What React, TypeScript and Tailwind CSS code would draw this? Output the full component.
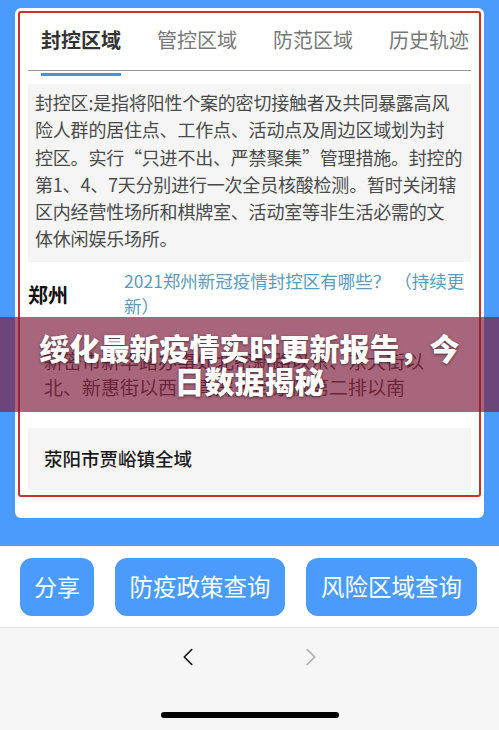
import { ChevronLeft, ChevronRight } from 'lucide-react'

const FONT = { fontFamily: '"Noto Sans CJK SC", "Noto Sans", sans-serif' }

const TABS = ['封控区域', '管控区域', '防范区域', '历史轨迹']

const DEFINITION = [
  '封控区:是指将阳性个案的密切接触者及共同暴露高风',
  '险人群的居住点、工作点、活动点及周边区域划为封',
  '控区。实行“只进不出、严禁聚集”管理措施。封控的',
  '第1、4、7天分别进行一次全员核酸检测。暂时关闭辖',
  '区内经营性场所和棋牌室、活动室等非生活必需的文',
  '体休闲娱乐场所。',
]

const XINMI = ['新密市新华路办事处北密新路以东、东大街以', '北、新惠街以西、青屏大街东侧第二排以南']

export default function App() {
  return (
    <div className="relative flex h-[730px] w-[499px] flex-col overflow-hidden bg-[#f6f6f6]" style={FONT}>
      <section className="h-[546px] bg-[#4a9bfb] px-[15px] pt-[8px]">
        <div className="rounded-[6px] bg-white px-[3px] pt-[3px] pb-[21px]">
          <div className="rounded-[3px] border-[2.5px] border-[#c9302c] px-[8px]">
            <nav className="relative flex h-[58px] items-center gap-[36px] border-b border-[#9a9a9a] pl-[13px] pb-[4px]">
              {TABS.map((t, i) => (
                <span
                  key={t}
                  className={
                    i === 0
                      ? 'relative text-[20px] font-bold text-[#333]'
                      : 'text-[20px] text-[#777]'
                  }
                >
                  {t}
                  {i === 0 && <span className="absolute -bottom-[21px] left-0 h-[3px] w-full bg-[#4f8fd6]" />}
                </span>
              ))}
            </nav>

            <div className="mt-[13px] bg-[#f5f5f5] pl-[7px] pt-[5px] pb-[9px] text-[18px] leading-[27.3px] tracking-[-0.2px] text-[#4a4a4a]">
              {DEFINITION.map((line) => (
                <div key={line} className="whitespace-nowrap">{line}</div>
              ))}
            </div>

            <div className="flex h-[62px] items-center">
              <span className="w-[96px] pt-[4px] text-[20px] font-bold text-[#111]">郑州</span>
              <p className="flex-1 text-[17.5px] leading-[25px] text-[#5b9bbb]">
                2021郑州新冠疫情封控区有哪些？ （持续更新）
              </p>
            </div>

            <div className="pl-[16px] pt-[24px] pb-[24px] text-[19px] leading-[26px] text-[#4a3a3a]">
              {XINMI.map((line) => (
                <div key={line} className="whitespace-nowrap">{line}</div>
              ))}
            </div>

            <div className="mt-[4px] mb-[5px] flex h-[62px] items-center bg-[#f5f5f5] pl-[16px] text-[18.5px] font-medium text-[#1a1a1a]">
              荥阳市贾峪镇全域
            </div>
          </div>
        </div>
      </section>

      <footer className="flex h-[82px] items-center gap-[21px] border-b border-[#e4e4e4] bg-white px-[20px]">
        <button className="h-[58px] w-[74px] rounded-[12px] bg-[#4a9bfb] text-[23px] text-white">分享</button>
        <button className="h-[58px] w-[170px] rounded-[12px] bg-[#4a9bfb] text-[23.5px] text-white">防疫政策查询</button>
        <button className="h-[58px] w-[171px] rounded-[12px] bg-[#4a9bfb] text-[23.5px] text-white">风险区域查询</button>
      </footer>

      <div className="flex flex-1 flex-col items-center">
        <div className="mt-[14px] flex gap-[93px]">
          <ChevronLeft className="h-[30px] w-[30px] text-[#111]" strokeWidth={1.3} />
          <ChevronRight className="h-[30px] w-[30px] text-[#aaa]" strokeWidth={1.3} />
        </div>
        <div className="mt-[40px] h-[6px] w-[178px] rounded-full bg-black" />
      </div>

      <div className="absolute left-0 top-[317px] flex h-[95px] w-full flex-col items-center justify-center bg-[rgba(125,30,60,0.68)] px-[30px] pb-[2px]">
        <h1 className="text-center text-[30px] font-black leading-[33px] text-white [text-shadow:0_1px_3px_rgba(0,0,0,0.55)]">
          绥化最新疫情实时更新报告，今日数据揭秘
        </h1>
      </div>
    </div>
  )
}
